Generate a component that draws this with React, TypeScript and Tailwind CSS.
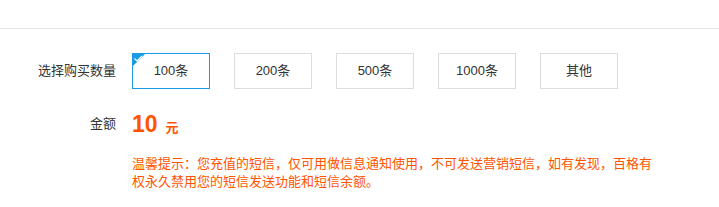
const font = { fontFamily: '"Liberation Sans", "Noto Sans CJK SC", sans-serif' };

const options = ["100条", "200条", "500条", "1000条", "其他"];

function Option({ label, selected }: { label: string; selected: boolean }) {
  return (
    <div
      className={`relative flex h-[36px] w-[78px] items-center justify-center border text-[13px] text-[#333] ${
        selected ? "border-[#1a9be6]" : "border-[#dddddd]"
      }`}
    >
      {selected && (
        <svg
          className="absolute -left-px -top-px"
          width="14"
          height="14"
          viewBox="0 0 14 14"
        >
          <path d="M0 0H14L0 14Z" fill="#1a9be6" />
          <path d="M2.5 5.5L5 8L10 3" fill="none" stroke="#ffffff" strokeWidth="1.2" />
        </svg>
      )}
      {label}
    </div>
  );
}

export default function App() {
  return (
    <div className="h-[207px] w-[719px] overflow-hidden bg-white" style={font}>
      <div className="h-[28px]" />
      <div className="h-px bg-[#e5e5e5]" />

      <div className="mt-[24px] flex items-center">
        <div className="w-[116px] text-right text-[13px] text-[#333]">选择购买数量</div>
        <div className="ml-[16px] flex gap-[24px]">
          {options.map((o, i) => (
            <Option key={o} label={o} selected={i === 0} />
          ))}
        </div>
      </div>

      <div className="mt-[20px] flex h-[30px] items-center">
        <div className="w-[116px] text-right text-[13px] text-[#333]">金额</div>
        <div className="ml-[16px] flex items-baseline text-[#ff5500]">
          <span className="text-[23px] font-bold leading-none">10</span>
          <span className="ml-[8px] text-[13px] font-bold leading-none">元</span>
        </div>
      </div>

      <p className="ml-[132px] mt-[16px] w-[528px] text-[13px] leading-[18px] text-[#ff5500]">
        温馨提示：您充值的短信，仅可用做信息通知使用，不可发送营销短信，如有发现，百格有权永久禁用您的短信发送功能和短信余额。
      </p>
    </div>
  );
}
